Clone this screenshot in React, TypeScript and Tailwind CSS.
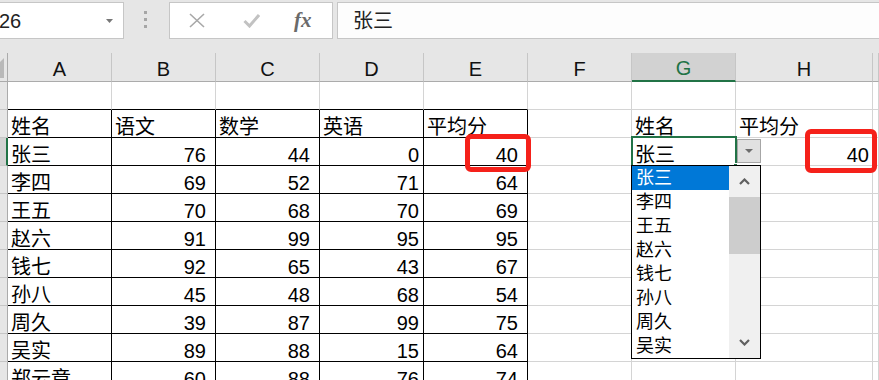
import React from 'react';

type Val = string | number;

const COLS = ['A', 'B', 'C', 'D', 'E', 'F', 'G', 'H', ''];
const WIDTHS = ['w-[104px]', 'w-[104px]', 'w-[104px]', 'w-[104px]', 'w-[104px]', 'w-[104px]', 'w-[104px]', 'w-[137px]', 'flex-1'];
// right padding for numbers, per column
const NUM_PAD = ['pr-[9px]', 'pr-[9px]', 'pr-[9px]', 'pr-[4px]', 'pr-[9px]', 'pr-[9px]', 'pr-[9px]', 'pr-[3px]', 'pr-[3px]'];

const scores: [string, number, number, number, number][] = [
  ['李四', 69, 52, 71, 64],
  ['王五', 70, 68, 70, 69],
  ['赵六', 91, 99, 95, 95],
  ['钱七', 92, 65, 43, 67],
  ['孙八', 45, 48, 68, 54],
  ['周久', 39, 87, 99, 75],
  ['吴实', 89, 88, 15, 64],
  ['郑云章', 60, 88, 76, 74],
];

const rows: Val[][] = [
  ['', '', '', '', '', '', '', '', ''],
  ['姓名', '语文', '数学', '英语', '平均分', '', '姓名', '平均分', ''],
  ['张三', 76, 44, 0, 40, '', '张三', 40, ''],
  ...scores.map((s) => [...s, '', '', '', ''] as Val[]),
];

const names = ['张三', '李四', '王五', '赵六', '钱七', '孙八', '周久', '吴实'];

const Cell: React.FC<{ v: Val; r: number; c: number }> = ({ v, r, c }) => {
  const inTable = r >= 1 && c <= 4;
  const bottomBlack = c <= 4;
  const isNum = typeof v === 'number';
  return (
    <div
      className={`flex h-[28px] shrink-0 items-end whitespace-nowrap border-r border-b text-[20px] leading-[20px] text-black ${WIDTHS[c]} ${
        inTable ? 'border-r-black' : 'border-r-[#d4d4d4]'
      } ${bottomBlack ? 'border-b-black' : 'border-b-[#d4d4d4]'} ${isNum ? `justify-end ${NUM_PAD[c]}` : 'pl-[3px]'}`}
    >
      {v}
    </div>
  );
};

const FormulaBar = () => (
  <div className="flex h-[53px] items-start bg-[#e6e6e6] pt-[2px]">
    <div className="flex h-[37px] w-[124px] items-center justify-between border-y border-r border-[#c6c6c6] bg-white pr-[10px]">
      <span className="ml-[-1px] text-[20px] leading-none text-[#222]">26</span>
      <svg width="7" height="4" viewBox="0 0 7 4">
        <polygon points="0,0 7,0 3.5,4" fill="#777" />
      </svg>
    </div>
    <div className="ml-[20px] mt-[9px] flex flex-col gap-[4px]">
      <div className="h-[3px] w-[3px] bg-[#a6a6a6]" />
      <div className="h-[3px] w-[3px] bg-[#a6a6a6]" />
      <div className="h-[3px] w-[3px] bg-[#a6a6a6]" />
    </div>
    <div className="ml-[22px] flex h-[37px] w-[164px] items-center border border-[#c6c6c6] bg-white pl-[18px]">
      <svg width="18" height="15" viewBox="0 0 18 15">
        <path d="M2 1 L16 14 M16 1 L2 14" stroke="#a8a8a8" strokeWidth="1.6" fill="none" />
      </svg>
      <svg className="ml-[37px]" width="17" height="15" viewBox="0 0 17 15">
        <polyline points="1.5,8 6.5,13 16,2" stroke="#c2c2c2" strokeWidth="3" fill="none" />
      </svg>
      <span className="ml-[34px] font-['Liberation_Serif',serif] text-[21px] font-bold italic leading-none text-[#6a6a6a]">fx</span>
    </div>
    <div className="ml-[4px] flex h-[37px] flex-1 items-center border-y border-l border-[#c6c6c6] bg-[#fdfdfd] pl-[15px] text-[20px] leading-none text-[#222]">
      张三
    </div>
  </div>
);

const ColumnHeader = () => (
  <div className="flex h-[29px] bg-[#e6e6e6]">
    <div className="relative w-[8px] shrink-0 border-r border-b border-r-[#ababab] border-b-[#ababab]">
      <svg className="absolute left-0 top-[5px]" width="4" height="20" viewBox="0 0 4 20">
        <polygon points="0,4 4,0 4,20 0,20" fill="#b9b9b9" />
      </svg>
    </div>
    {COLS.map((c, i) =>
      c === 'G' ? (
        <div
          key={i}
          className={`flex shrink-0 items-end justify-center border-r border-b-2 border-r-[#c6c6c6] border-b-[#217346] bg-[#d2d2d2] pb-[2px] text-[20px] leading-[20px] text-[#217346] ${WIDTHS[i]}`}
        >
          {c}
        </div>
      ) : (
        <div
          key={i}
          className={`flex shrink-0 items-end justify-center border-r border-b border-r-[#c6c6c6] border-b-[#ababab] pb-[2px] text-[20px] leading-[20px] text-[#111] ${WIDTHS[i]}`}
        >
          {c}
        </div>
      )
    )}
  </div>
);

export default function App() {
  return (
    <div className="relative h-[380px] w-[879px] overflow-hidden bg-white font-['Liberation_Sans','Noto_Sans_CJK_SC',sans-serif]">
      <FormulaBar />
      <ColumnHeader />
      <div className="flex flex-col">
        {rows.map((row, r) => (
          <div key={r} className="flex">
            <div
              className={`h-[28px] w-[8px] shrink-0 border-b border-b-[#c6c6c6] ${
                r === 2 ? 'border-r-2 border-r-[#217346] bg-[#d2d2d2]' : 'border-r border-r-[#ababab] bg-[#e6e6e6]'
              }`}
            />
            {row.map((v, c) => (
              <Cell key={c} v={v} r={r} c={c} />
            ))}
          </div>
        ))}
      </div>

      {/* active cell G3 */}
      <div className="absolute left-[631px] top-[136px] h-[31px] w-[106px] border-2 border-[#217346]" />
      <div className="absolute left-[733px] top-[163px] h-[5px] w-[5px] border border-white bg-[#217346]" />

      {/* validation dropdown button */}
      <div className="absolute left-[737px] top-[139px] flex h-[24px] w-[24px] items-center justify-center border border-[#a6a6a6] bg-[#e1e1e1]">
        <svg width="8" height="4" viewBox="0 0 8 4">
          <polygon points="0,0 8,0 4,4" fill="#6d6d6d" />
        </svg>
      </div>

      {/* dropdown list */}
      <div className="absolute left-[631px] top-[165px] flex h-[194px] w-[130px] border border-black bg-white">
        <div className="flex flex-1 flex-col">
          {names.map((n, i) => (
            <div
              key={n}
              className={`h-[24px] pl-[4px] text-[18px] leading-[24px] ${i === 0 ? 'bg-[#0078d7] text-white' : 'text-black'}`}
            >
              {n}
            </div>
          ))}
        </div>
        <div className="flex w-[31px] flex-col bg-[#f0f0f0]">
          <div className="flex h-[31px] items-center justify-center">
            <svg width="11" height="7" viewBox="0 0 11 7">
              <polyline points="1,6 5.5,1.5 10,6" stroke="#606060" strokeWidth="2.2" fill="none" />
            </svg>
          </div>
          <div className="h-[57px] bg-[#cdcdcd]" />
          <div className="flex-1" />
          <div className="flex h-[31px] items-center justify-center">
            <svg width="11" height="7" viewBox="0 0 11 7">
              <polyline points="1,1 5.5,5.5 10,1" stroke="#606060" strokeWidth="2.2" fill="none" />
            </svg>
          </div>
        </div>
      </div>

      {/* red highlight boxes */}
      <div className="absolute left-[465px] top-[134px] h-[38px] w-[66px] rounded-[6px] border-[5px] border-[#f5211a]" />
      <div className="absolute left-[805px] top-[129px] h-[44px] w-[72px] rounded-[6px] border-[5px] border-[#f5211a]" />
    </div>
  );
}
